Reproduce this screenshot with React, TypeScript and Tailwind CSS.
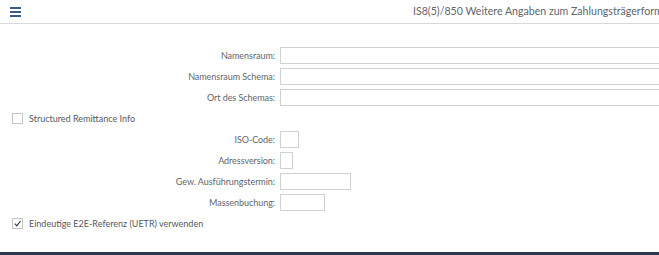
import React from "react";

const font = { fontFamily: "Lato, 'Open Sans', sans-serif" };

function Row({ label, w }: { label: string; w: string }) {
  return (
    <div className="flex items-center h-[21px]">
      <div className="w-[280px] shrink-0 text-right pr-[5px] text-[9px] tracking-[-0.05px] text-[#62666b]">{label}</div>
      <div className={`h-[17px] border border-[#cfd2d5] bg-white shrink-0 ${w}`} />
    </div>
  );
}

export default function App() {
  return (
    <div className="w-[659px] h-[255px] bg-white overflow-hidden flex flex-col" style={font}>
      <div className="h-[24px] flex items-center border-b border-[#d9d9d9] shrink-0">
        <div className="pl-[10px] flex flex-col gap-[2px] w-[30px]">
          <div className="h-[2px] w-[11px] bg-[#3d5a80]" />
          <div className="h-[2px] w-[11px] bg-[#3d5a80]" />
          <div className="h-[2px] w-[11px] bg-[#3d5a80]" />
        </div>
        <div className="flex-1 overflow-hidden whitespace-nowrap pl-[383px] text-[10.6px] text-[#62666b]">
          IS8(5)/850 Weitere Angaben zum Zahlungsträgerformat
        </div>
      </div>
      <div className="flex-1 pt-[21px] flex flex-col">
        <Row label="Namensraum:" w="w-[400px]" />
        <Row label="Namensraum Schema:" w="w-[400px]" />
        <Row label="Ort des Schemas:" w="w-[400px]" />
        <div className="flex items-center h-[21px] pl-[12px] gap-[6px]">
          <div className="w-[11px] h-[11px] border border-[#c4c7ca] bg-white" />
          <span className="text-[9px] text-[#55595e]">Structured Remittance Info</span>
        </div>
        <Row label="ISO-Code:" w="w-[19px]" />
        <Row label="Adressversion:" w="w-[13px]" />
        <Row label="Gew. Ausführungstermin:" w="w-[71px]" />
        <Row label="Massenbuchung:" w="w-[45px]" />
        <div className="flex items-center h-[21px] pl-[12px] gap-[6px]">
          <div className="w-[11px] h-[11px] border border-[#c4c7ca] bg-white flex items-center justify-center">
            <svg width="9" height="9" viewBox="0 0 10 10">
              <path d="M2 5.2 L4.2 7.5 L8.3 2.3" stroke="#3a3f45" strokeWidth="1.3" fill="none" />
            </svg>
          </div>
          <span className="text-[9px] text-[#55595e]">Eindeutige E2E-Referenz (UETR) verwenden</span>
        </div>
        <div className="flex-1" />
        <div className="h-[3px] bg-[#2b3a4a] shrink-0" />
      </div>
    </div>
  );
}
